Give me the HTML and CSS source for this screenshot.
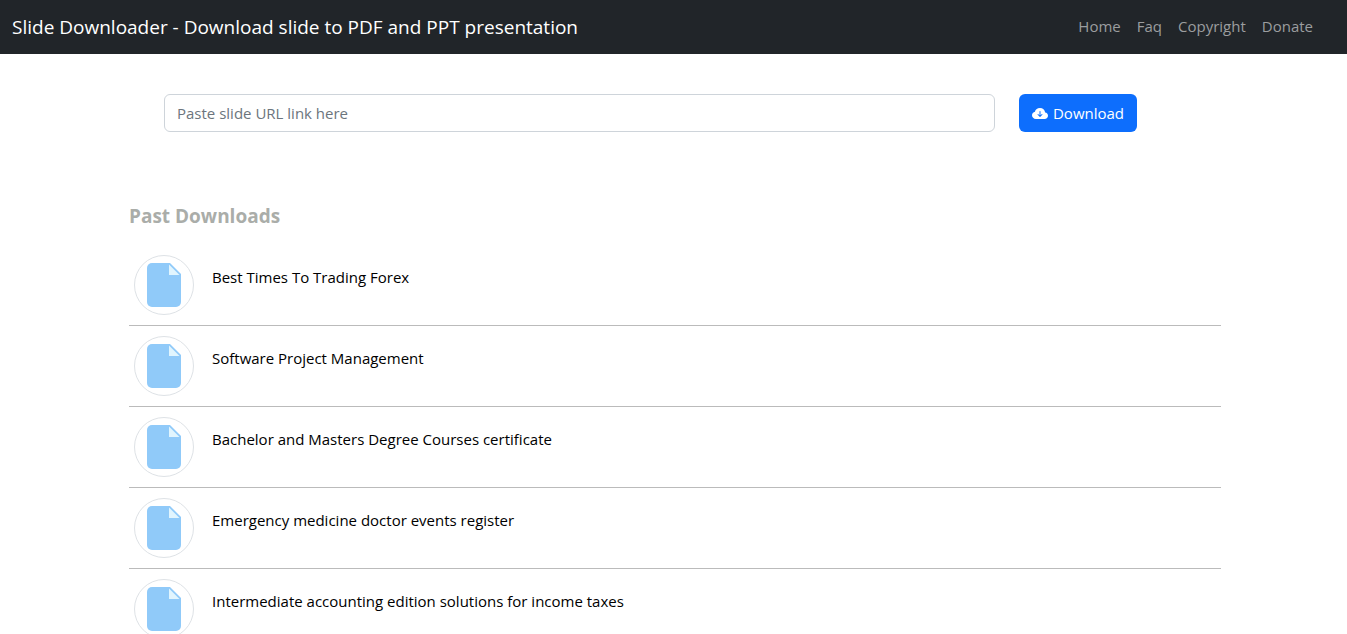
FILE: index.html
```html
<!DOCTYPE html>
<html lang="en">
<head>
<meta charset="utf-8">
<meta name="viewport" content="width=device-width, initial-scale=1">
<title>Slide Downloader</title>
<link rel="stylesheet" href="styles.css">
</head>
<body>
<svg class="defs" aria-hidden="true">
  <symbol id="file" viewBox="0 0 34 44">
    <path fill="#90caf9" d="M5 0H23L34 11V39a5 5 0 0 1-5 5H5a5 5 0 0 1-5-5V5a5 5 0 0 1 5-5z"/>
    <path fill="#e1f5fe" d="M22 1.500V12H32.500z"/>
  </symbol>
</svg>
<header class="navbar">
  <a class="brand" href="#">Slide Downloader - Download slide to PDF and PPT presentation</a>
  <nav class="nav">
    <a href="#">Home</a>
    <a href="#">Faq</a>
    <a href="#">Copyright</a>
    <a href="#">Donate</a>
  </nav>
</header>
<main class="page">
  <form class="search">
    <input class="url" type="text" placeholder="Paste slide URL link here" aria-label="Slide URL">
    <button class="download" type="button">
      <svg class="cloud" viewBox="0 0 16 16" aria-hidden="true"><path fill="currentColor" d="M8 2a5.53 5.53 0 0 0-3.594 1.342c-.766.66-1.321 1.52-1.464 2.383C1.266 6.095 0 7.555 0 9.318 0 11.366 1.708 13 3.781 13h8.906C14.502 13 16 11.57 16 9.773c0-1.636-1.242-2.969-2.834-3.194C12.923 3.999 10.69 2 8 2zm2.354 6.854-2 2a.5.5 0 0 1-.708 0l-2-2a.5.5 0 1 1 .708-.708L7.5 9.293V5.5a.5.5 0 0 1 1 0v3.793l1.146-1.147a.5.5 0 0 1 .708.708z"/></svg>
      Download
    </button>
  </form>
  <section>
    <h1 class="heading">Past Downloads</h1>
    <ul class="list">
      <li class="item"><span class="badge"><svg class="file"><use href="#file"/></svg></span><a href="#">Best Times To Trading Forex</a></li>
      <li class="item"><span class="badge"><svg class="file"><use href="#file"/></svg></span><a href="#">Software Project Management</a></li>
      <li class="item"><span class="badge"><svg class="file"><use href="#file"/></svg></span><a href="#">Bachelor and Masters Degree Courses certificate</a></li>
      <li class="item"><span class="badge"><svg class="file"><use href="#file"/></svg></span><a href="#">Emergency medicine doctor events register</a></li>
      <li class="item"><span class="badge"><svg class="file"><use href="#file"/></svg></span><a href="#">Intermediate accounting edition solutions for income taxes</a></li>
    </ul>
  </section>
</main>
</body>
</html>
```

FILE: styles.css
```css
* { box-sizing: border-box; }
html { overflow: hidden; }
body { margin: 0; background: #fff; color: #000; font: 16px/24px "Segoe UI", "Open Sans", "Noto Sans", sans-serif; }
a { color: inherit; text-decoration: none; }
.defs { display: none; }
.navbar { display: flex; align-items: center; justify-content: space-between; background: #212529; padding: 12px 26px 12px 12px; }
.brand { color: #fff; font-size: 19px; line-height: 30px; }
.nav { display: flex; padding-bottom: 2px; color: #9b9d9f; font-size: 15px; }
.nav a { padding: 0 8px; }
.page { padding: 40px 126px 0 129px; }
.search { display: flex; gap: 24px; padding: 0 84px 0 35px; }
.url { flex: 1; min-width: 0; height: 38px; padding: 6px 12px; border: 1px solid #ced4da; border-radius: 6px; font: inherit; font-size: 15px; }
.url::placeholder { color: #6c757d; opacity: 1; }
.download { display: flex; align-items: center; justify-content: center; gap: 5px; width: 118px; height: 38px; padding: 0; border: 0; border-radius: 6px; background: #0d6efd; color: #fff; font: inherit; font-size: 15px; }
.cloud { width: 16px; height: 16px; margin-top: 2px; }
.heading { margin: 70px 0 0; color: #aaada9; font-size: 19px; line-height: 28px; }
.list { list-style: none; margin: 15px 0 0; padding: 0; }
.item { display: flex; align-items: flex-start; gap: 18px; height: 81px; padding: 10px 5px; border-bottom: 1px solid #bbb; font-size: 15px; }
.item a { margin-top: 10px; }
.badge { display: flex; align-items: center; justify-content: center; width: 60px; height: 60px; border: 1px solid #dee2e6; border-radius: 50%; }
.file { width: 34px; height: 44px; }
```
